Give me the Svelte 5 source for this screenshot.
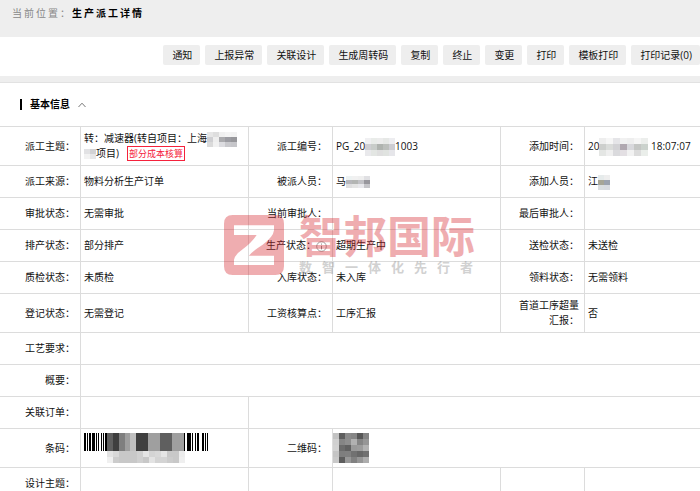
<script lang="ts">
  type Cell = {
    text?: string;
    kind?: "subject" | "number" | "time" | "person" | "creator" | "barcode" | "qrcode";
    span?: number;
  };
  type Field = { label: string; info?: boolean; value: Cell };

  const actions = [
    "通知",
    "上报异常",
    "关联设计",
    "生成周转码",
    "复制",
    "终止",
    "变更",
    "打印",
    "模板打印",
    "打印记录(0)",
  ];

  const rows: Field[][] = [
    [
      { label: "派工主题：", value: { kind: "subject" } },
      { label: "派工编号：", value: { kind: "number" } },
      { label: "添加时间：", value: { kind: "time" } },
    ],
    [
      { label: "派工来源：", value: { text: "物料分析生产订单" } },
      { label: "被派人员：", value: { kind: "person" } },
      { label: "添加人员：", value: { kind: "creator" } },
    ],
    [
      { label: "审批状态：", value: { text: "无需审批" } },
      { label: "当前审批人：", value: {} },
      { label: "最后审批人：", value: {} },
    ],
    [
      { label: "排产状态：", value: { text: "部分排产" } },
      { label: "生产状态：", info: true, value: { text: "超期生产中" } },
      { label: "送检状态：", value: { text: "未送检" } },
    ],
    [
      { label: "质检状态：", value: { text: "未质检" } },
      { label: "入库状态：", value: { text: "未入库" } },
      { label: "领料状态：", value: { text: "无需领料" } },
    ],
    [
      { label: "登记状态：", value: { text: "无需登记" } },
      { label: "工资核算点：", value: { text: "工序汇报" } },
      { label: "首道工序超量汇报：", value: { text: "否" } },
    ],
    [{ label: "工艺要求：", value: { span: 5 } }],
    [{ label: "概要：", value: { span: 5 } }],
    [{ label: "关联订单：", value: {} }],
    [
      { label: "条码：", value: { kind: "barcode" } },
      { label: "二维码：", value: { kind: "qrcode", span: 3 } },
    ],
    [
      { label: "设计主题：", value: {} },
      { label: "", value: {} },
      { label: "", value: {} },
    ],
  ];

  // masked pieces, one list of greys per line of cells
  const masks = {
    subject: [
      ["#e6e6e6", "#dedede", "#f0f0f0", "#f4f4f4", "#f2f2f2"],
      ["#cfcfd2", "#eeeeee", "#ababae", "#9c9ca2", "#97979b"],
      ["#dadada", "#f1f1f1", "#dcdce0", "#c9c9cd", "#c6c6ca"],
    ],
    subjectEnd: [
      ["#e2e2e4", "#d2d2d5"],
      ["#f2f2f2", "#e6e6e8"],
    ],
    number: [
      ["#f0f0f2", "#e9ece9", "#ececec", "#e6e8e6", "#ededf0"],
      ["#cfcfd3", "#c8ccc9", "#afb3af", "#bcbfbc", "#cdcdd2"],
      ["#e9e9ec", "#e3e6e3", "#dfdfdf", "#e0e3e0", "#e6e6ea"],
    ],
    time: [
      ["#eeeeee", "#f6f6f6", "#e5e5e8", "#f1f1f1", "#eeeeee", "#f5f5f5", "#eceeec"],
      ["#cdcfcd", "#dadcda", "#d2d2d5", "#b0a8b0", "#d8d8dc", "#c4c6c4", "#cbd2cd"],
      ["#e4e6e4", "#efefef", "#dadadd", "#e3dfe3", "#f2f2f2", "#dcdcdc", "#eaeeea"],
    ],
    person: [
      ["#edf2f2", "#f1f1f1", "#efefef", "#e0e0e3"],
      ["#b7b7bb", "#b3b5b3", "#c2c2c6", "#98979d"],
      ["#dededf", "#e4e4e4", "#e8e8ec", "#c5c5c9"],
    ],
    creator: [
      ["#e6ebeb", "#eeeeee"],
      ["#a7a596", "#9ca2ae"],
      ["#dadde0", "#d9dbe0"],
    ],
    qrcode: [
      ["#c2c2c2", "#5e5e5e", "#8b8b8b", "#868686", "#575757", "#848484"],
      ["#d0d0d0", "#858585", "#8e8e8e", "#b1b1b1", "#858585", "#969696"],
      ["#d2d2d2", "#6c6c6c", "#616161", "#999999", "#9c9c9c", "#b2b2b2"],
      ["#c4c4c4", "#7e7e7e", "#808080", "#717171", "#676767", "#707070"],
      ["#c9c9c9", "#5d5d5d", "#989898", "#818181", "#969696", "#adadad"],
    ],
  };

  const bars = [
    [0, 2], [3, 1], [5, 2], [8, 3], [12, 1], [14, 1], [17, 1], [19, 1], [21, 2],
    [100, 1], [103, 4], [108, 1], [111, 1], [113, 2], [118, 2], [121, 1], [123, 1],
  ];
  const barBlocks: [number, number, string][] = [
    [23, 6, "#5f5f5f"],
    [29, 6, "#3f3f3f"],
    [35, 6, "#7f7f7f"],
    [41, 5, "#9f9f9f"],
    [46, 6, "#bfbfbf"],
    [52, 12, "#3f3f3f"],
    [64, 12, "#9f9f9f"],
    [76, 12, "#5f5f5f"],
    [88, 12, "#9f9f9f"],
  ];
  const barText = [
    ["#e3e3e3", "#d8d8d8", "#c8c8c8", "#c8c8c8", "#c8c8c8", "#d0d0d0", "#e5e5e5", "#d4d4d4", "#d8d8d8", "#e5e5e5", "#c8c8c8", "#c8c8c8", "#ececec"],
    ["#f0f0f0", "#cccccc", "#c8c8c8", "#c8c8c8", "#c8c8c8", "#d0d0d0", "#c8c8c8", "#e3e3e3", "#d4d4d4", "#d4d4d4", "#cccccc", "#c8c8c8", "#efefef"],
  ];

  let open = $state(true);
</script>

{#snippet mask(cells: string[][], w: number, h: number)}
  <svg class="mask" width={cells[0].length * w} height={cells.length * h} shape-rendering="crispEdges" aria-hidden="true">
    {#each cells as line, y}
      {#each line as fill, x}
        <rect x={x * w} y={y * h} width={w} height={h} {fill} />
      {/each}
    {/each}
  </svg>
{/snippet}

{#snippet content(cell: Cell)}
  {#if cell.kind === "subject"}
    转：减速器(转自项目：上海{@render mask(masks.subject, 6, 5)}<br />{@render mask(masks.subjectEnd, 6, 5)}项目)<span class="tag">部分成本核算</span>
  {:else if cell.kind === "number"}
    PG_20{@render mask(masks.number, 6, 6)}1003
  {:else if cell.kind === "time"}
    20{@render mask(masks.time, 7, 6)} 18:07:07
  {:else if cell.kind === "person"}
    马{@render mask(masks.person, 6, 4)}
  {:else if cell.kind === "creator"}
    江{@render mask(masks.creator, 6, 5)}
  {:else if cell.kind === "barcode"}
    <svg class="code" width="124" height="30" shape-rendering="crispEdges" role="img" aria-label="条码">
      {#each bars as [x, w]}
        <rect {x} y="0" width={w} height="18" fill="#000" />
      {/each}
      {#each barBlocks as [x, w, fill]}
        <rect {x} y="0" width={w} height="18" {fill} />
      {/each}
      {#each barText as line, y}
        {#each line as fill, x}
          <rect x={23 + x * 6} y={18 + y * 6} width="6" height="6" {fill} />
        {/each}
      {/each}
    </svg>
  {:else if cell.kind === "qrcode"}
    <div class="code">{@render mask(masks.qrcode, 6, 6)}</div>
  {:else}
    {cell.text ?? ""}
  {/if}
{/snippet}

<div class="page">
  <header class="crumb">
    <span class="where">当前位置：</span>
    <h1>生产派工详情</h1>
  </header>

  <nav class="toolbar">
    {#each actions as action}
      <button type="button">{action}</button>
    {/each}
  </nav>

  <section>
    <div class="section-head">
      <h2>基本信息</h2>
      <button class="toggle" type="button" aria-label="收起" aria-expanded={open} onclick={() => (open = !open)}>
        <svg class:closed={!open} width="8" height="6" viewBox="0 0 8 6">
          <path d="M0.5 5 L4 1.2 L7.5 5" fill="none" stroke="#777" stroke-width="1" />
        </svg>
      </button>
    </div>

    {#if open}
      <div class="sheet">
        <table>
          <colgroup>
            <col class="first" />
            <col class="value" />
            <col class="label" />
            <col class="value" />
            <col class="label" />
            <col />
          </colgroup>
          <tbody>
            {#each rows as row}
              <tr>
                {#each row as field, i}
                  <th scope="row">
                    {field.label}{#if field.info}<svg class="info" width="11" height="11" viewBox="0 0 11 11">
                        <circle cx="5.5" cy="5.5" r="4.8" fill="none" stroke="#888" stroke-width="0.8" />
                        <path d="M5.5 2.6 V3.6 M5.5 4.8 V8.4" stroke="#888" stroke-width="1" />
                      </svg>{/if}
                  </th>
                  <td
                    colspan={field.value.span}
                    class:flush={field.value.kind === "qrcode"}
                    class:last={i === row.length - 1 && (row.length === 3 || field.value.span)}
                  >
                    {@render content(field.value)}
                  </td>
                {/each}
                {#if row.length === 1 && !row[0].value.span}
                  <td class="last" colspan="4"></td>
                {/if}
              </tr>
            {/each}
          </tbody>
        </table>

        <div class="watermark" aria-hidden="true">
          <svg width="60" height="60" viewBox="0 0 180 180">
            <path
              fill="#d62a32"
              fill-rule="evenodd"
              d="M26 0 H154 Q180 0 180 26 V154 Q180 180 154 180 H26 Q0 180 0 154 V26 Q0 0 26 0 Z
                 M30 31 V60 H98 Q84 82 56 103 Q32 120 30 134 V150 H150 V122 H75 Q86 108 116 89 Q148 66 150 46 V31 Z"
            />
          </svg>
          <div class="brand">
            <span class="name">智邦国际</span>
            <span class="slogan">数智一体化先行者</span>
          </div>
        </div>
      </div>
    {/if}
  </section>
</div>

<style>
  :global(body) {
    background: #fff;
  }

  .page {
    font-family: "Open Sans", "Noto Sans CJK SC", sans-serif;
    font-size: 10px;
    line-height: 15px;
    color: #111;
    overflow: hidden;
  }

  h1,
  h2 {
    margin: 0;
    font-size: inherit;
    font-weight: 700;
    color: #000;
  }

  .crumb {
    display: flex;
    padding: 6px 12px 16px;
    background: #eee;
    letter-spacing: 2px;
  }

  .where {
    color: #888;
  }

  .toolbar {
    display: flex;
    justify-content: flex-end;
    gap: 5px;
    padding: 8px 0 11px;
    border-bottom: 6px solid #eee;
  }

  .toolbar button {
    flex: none;
    height: 20px;
    padding: 0 8px 0 9px;
    border: none;
    border-radius: 2px;
    background: #eee;
    color: #111;
    font: inherit;
    cursor: pointer;
  }

  .toolbar button:hover {
    background: #e2e2e2;
  }

  .section-head {
    display: flex;
    align-items: center;
    gap: 8px;
    height: 43px;
    padding-left: 20px;
    border-top: 1px solid #e2e2e2;
  }

  h2 {
    padding-left: 8px;
    border-left: 2px solid #000;
    line-height: 11px;
  }

  .toggle {
    display: flex;
    padding: 0;
    border: none;
    background: none;
    cursor: pointer;
  }

  .toggle .closed {
    transform: rotate(180deg);
  }

  .sheet {
    position: relative;
  }

  table {
    width: 100%;
    table-layout: fixed;
    border-spacing: 0;
    border-top: 1px solid #dcdcdc;
  }

  .first {
    width: 81px;
  }

  .value {
    width: 24%;
  }

  .label {
    width: 12%;
  }

  th,
  td {
    box-sizing: border-box;
    height: 32px;
    padding: 4px 3px;
    border-right: 1px solid #dcdcdc;
    border-bottom: 1px solid #dcdcdc;
    font-weight: 400;
    text-align: left;
    vertical-align: middle;
  }

  th {
    padding: 4px 5px 4px 12px;
    text-align: right;
  }

  td.last {
    border-right: none;
  }

  td.flush {
    padding-left: 0;
  }

  .mask {
    vertical-align: middle;
    margin: -4px 0;
  }

  .code {
    display: block;
  }

  .code .mask {
    display: block;
    margin: 0;
  }

  .tag {
    display: inline-block;
    margin-left: 8px;
    padding: 0 1px;
    border: 1px solid #f5223c;
    color: #f5223c;
    font-size: 9px;
    line-height: 13px;
    vertical-align: top;
  }

  .info {
    vertical-align: middle;
  }

  .watermark {
    position: absolute;
    top: 89px;
    left: 32%;
    display: flex;
    gap: 15px;
    opacity: 0.38;
    pointer-events: none;
  }

  .brand {
    display: flex;
    flex-direction: column;
    white-space: nowrap;
  }

  .name {
    color: #d62a32;
    font-size: 44px;
    font-weight: 700;
    line-height: 42px;
  }

  .slogan {
    color: #888;
    font-size: 13px;
    font-weight: 700;
    line-height: 20px;
    letter-spacing: 10px;
  }
</style>
